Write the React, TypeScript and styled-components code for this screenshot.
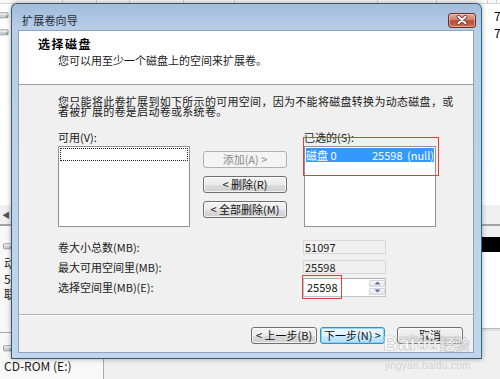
import React from 'react'
import styled, { createGlobalStyle } from 'styled-components'

const GlobalStyle = createGlobalStyle`
  html, body {
    margin: 0;
    padding: 0;
  }
  body {
    width: 500px;
    height: 379px;
    overflow: hidden;
    background: #fff;
    font-family: "Noto Sans CJK SC", "Noto Sans", sans-serif;
  }
`

const Scene = styled.div`
  position: relative;
  width: 500px;
  height: 379px;
  overflow: hidden;
`

/* ---------- disk management window behind the wizard ---------- */

const Backdrop = styled.div`
  display: flex;
  flex-direction: column;
  width: 500px;
  height: 379px;
  background: #fff;
  overflow: hidden;
`

const ColHeader = styled.div`
  display: flex;
  flex: none;
  height: 3px;
  border-bottom: 1px solid #d6d6d6;
  background: #f7f7f7;
`

const ColCell = styled.div<{ $w: number }>`
  flex: none;
  width: ${p => p.$w}px;
  border-right: 1px solid #cfcfcf;
`

const UpperList = styled.div`
  display: flex;
  flex-direction: column;
  flex: none;
  height: 201px;
  padding-top: 3px;
  box-sizing: border-box;
`

const VolRow = styled.div`
  display: flex;
  align-items: center;
  height: 17px;
  font-size: 12px;
  color: #000;
`

const RowSpacer = styled.div`
  flex: 1;
`

const ClipCell = styled.div`
  width: 6px;
  overflow: hidden;
  white-space: nowrap;
`

const HScroll = styled.div`
  display: flex;
  align-items: center;
  flex: none;
  height: 19px;
  padding-left: 2px;
  box-sizing: border-box;
  background: #f0f0f0;
  font-size: 8px;
  color: #555;
`

const Splitter = styled.div`
  flex: none;
  height: 2px;
  background: #a4a4a4;
`

const LowerPane = styled.div`
  display: flex;
  flex: 1;
  min-height: 0;
`

const DiskLabels = styled.div`
  display: flex;
  flex-direction: column;
  width: 103px;
  border-right: 1px solid #a9a9a9;
  background: #f8f8f8;
`

const DiskBlock = styled.div<{ $h: number; $top: number }>`
  display: flex;
  flex-direction: column;
  flex: none;
  height: ${p => p.$h}px;
  padding: ${p => p.$top}px 0 0 4px;
  box-sizing: border-box;
  border-bottom: 1px solid #a9a9a9;
  font-size: 12px;
  line-height: 15.5px;
  color: #1a1a1a;
  white-space: nowrap;
`

const DiskText = styled.div<{ $gap: number }>`
  margin-top: ${p => p.$gap}px;
`

const DiskGraph = styled.div`
  display: flex;
  flex-direction: column;
  flex: 1;
  background: #f0f0f0;
`

const GraphGap = styled.div`
  flex: none;
  height: 11px;
`

const UnallocatedStripe = styled.div`
  flex: none;
  height: 15px;
  background: #000;
`

const UnallocatedBody = styled.div`
  flex: none;
  height: 76px;
  background: #fff;
  border-bottom: 1px solid #b8b8b8;
  box-shadow: 0 2px 0 #ddd;
`

/* ---------- wizard window ---------- */

const Dialog = styled.div`
  position: absolute;
  left: 11px;
  top: 3px;
  width: 471px;
  height: 356px;
  box-sizing: border-box;
  display: flex;
  flex-direction: column;
  padding: 0 7px 5px 6px;
  border: 1px solid #42566f;
  border-right-color: #2b6c8c;
  border-radius: 6px 6px 0 0;
  background: linear-gradient(180deg, #a2bcda 0px, #b8cfe8 26px, #c0d6ee 100%);
  box-shadow: 0 0 5px rgba(0, 0, 0, 0.35);
`

const TitleBar = styled.div`
  display: flex;
  align-items: center;
  justify-content: space-between;
  height: 26px;
  padding: 6px 0 0 4px;
  margin-right: -2px;
  box-sizing: border-box;
`

const TitleText = styled.div`
  font-size: 11px;
  color: #1f2a36;
  letter-spacing: 0.2px;
`

const CloseButton = styled.div`
  display: flex;
  align-items: center;
  justify-content: center;
  width: 28px;
  height: 15px;
  box-sizing: border-box;
  border: 1px solid #6e2f28;
  border-radius: 3px;
  background: linear-gradient(180deg, #e4a89c 0%, #d3806f 45%, #bb4a35 52%, #cf6d55 100%);
  box-shadow: inset 0 0 0 1px rgba(255, 220, 210, 0.45);
`

const Client = styled.div`
  display: flex;
  flex-direction: column;
  flex: 1;
  border: 1px solid #8ea3bc;
  background: #f0f0f0;
  color: #111;
`

const Header = styled.div`
  display: flex;
  flex-direction: column;
  height: 54px;
  box-sizing: border-box;
  padding: 6px 0 0 19px;
  background: #fff;
  border-bottom: 1px solid #a0a0a0;
`

const HeaderTitle = styled.div`
  font-size: 12px;
  line-height: 14px;
  font-weight: 700;
  letter-spacing: 1.5px;
  color: #000;
`

const HeaderSub = styled.div`
  margin: 2px 0 0 20px;
  font-size: 11px;
  line-height: 14px;
  color: #1a1a1a;
`

const Body = styled.div`
  display: flex;
  flex-direction: column;
  flex: 1;
  padding-left: 39px;
`

const Desc = styled.div`
  margin-top: 11px;
  font-size: 11px;
  line-height: 10px;
  letter-spacing: 0.3px;
  white-space: nowrap;
  color: #1a1a1a;
`

const ListsRow = styled.div`
  display: flex;
  align-items: flex-start;
  margin-top: 15px;
`

const ListColumn = styled.div`
  display: flex;
  flex-direction: column;
  width: 132px;
`

const ListLabel = styled.div`
  height: 13px;
  margin-bottom: 2px;
  font-size: 11px;
  line-height: 13px;
  color: #1a1a1a;
  white-space: nowrap;
`

const ListBox = styled.div`
  display: flex;
  flex-direction: column;
  height: 81px;
  box-sizing: border-box;
  padding: 1px;
  border: 1px solid #8f9398;
  background: #fff;
`

const FocusRow = styled.div`
  height: 13px;
  box-sizing: border-box;
  border: 1px dotted #222;
`

const SelectedRow = styled.div`
  display: flex;
  align-items: center;
  height: 14px;
  overflow: hidden;
  background: #3399ff;
  color: #fff;
  font-size: 11px;
  white-space: nowrap;
`

const Cell = styled.span<{ $w?: number }>`
  flex: none;
  width: ${p => (p.$w ? `${p.$w}px` : 'auto')};
`

const ButtonColumn = styled.div`
  display: flex;
  flex-direction: column;
  gap: 8px;
  padding-top: 20px;
  margin: 0 17px 0 13px;
`

const Btn = styled.button<{ $w: number; $primary?: boolean }>`
  width: ${p => p.$w}px;
  height: 17px;
  padding: 0;
  box-sizing: border-box;
  border: 1px solid ${p => (p.$primary ? '#3a8ec4' : '#707070')};
  border-radius: 3px;
  background: ${p =>
    p.$primary
      ? 'linear-gradient(180deg, #f0f9fe 0%, #e0f3fd 50%, #c8eafd 51%, #b4def6 100%)'
      : 'linear-gradient(180deg, #f3f3f3 0%, #ebebeb 50%, #dddddd 51%, #cfcfcf 100%)'};
  box-shadow: inset 0 0 0 1px ${p => (p.$primary ? 'rgba(130, 210, 250, 0.9)' : 'rgba(255, 255, 255, 0.7)')};
  font-family: "Noto Sans CJK SC", "Noto Sans", sans-serif;
  font-size: 11px;
  line-height: 15px;
  color: #111;
  white-space: nowrap;

  &:disabled {
    border-color: #adb2b5;
    background: #f4f4f4;
    box-shadow: none;
    color: #8a8a8a;
  }
`

const Fields = styled.div`
  display: flex;
  flex-direction: column;
  margin-top: 10px;
`

const FieldRow = styled.div`
  display: flex;
  align-items: center;
  height: 20px;
`

const FieldLabel = styled.div`
  width: 245px;
  font-size: 11px;
  color: #222;
  white-space: nowrap;
`

const ReadOnlyBox = styled.div`
  display: flex;
  align-items: center;
  width: 83px;
  height: 14px;
  box-sizing: border-box;
  padding-left: 1px;
  border: 1px solid #d8d8d8;
  background: #f0f0f0;
  font-size: 11px;
  color: #222;
`

const SpinBox = styled.div`
  display: flex;
  width: 83px;
  height: 19px;
  box-sizing: border-box;
  border: 1px solid #bfc3c8;
  border-top-color: #abadb3;
  background: #fff;
`

const SpinValue = styled.div`
  display: flex;
  align-items: center;
  flex: 1;
  padding-left: 3px;
  font-size: 11px;
  color: #111;
`

const SpinButtons = styled.div`
  display: flex;
  flex-direction: column;
  width: 16px;
  padding: 1px 0;
  box-sizing: border-box;
  gap: 1px;
`

const SpinHalf = styled.div`
  display: flex;
  align-items: center;
  justify-content: center;
  flex: 1;
  border: 1px solid #d4d8de;
  border-radius: 1px;
  background: linear-gradient(180deg, #f6f7f9, #e3e6ea);
`

const Footer = styled.div`
  display: flex;
  justify-content: flex-end;
  align-items: flex-start;
  height: 38px;
  box-sizing: border-box;
  padding: 12px 10px 0 0;
  border-top: 1px solid #b3b3b3;
  box-shadow: inset 0 1px 0 #fff;
`

const NavGroup = styled.div`
  display: flex;
  gap: 3px;
  margin-right: 12px;
`

/* ---------- overlays: annotations and watermark ---------- */

const Annotation = styled.div<{ $x: number; $y: number; $w: number; $h: number }>`
  position: absolute;
  left: ${p => p.$x}px;
  top: ${p => p.$y}px;
  width: ${p => p.$w}px;
  height: ${p => p.$h}px;
  box-sizing: border-box;
  border: 1px solid #e43d3d;
  pointer-events: none;
`

const Watermark = styled.div`
  position: absolute;
  left: 383px;
  top: 332px;
  display: flex;
  align-items: flex-end;
  color: rgba(255, 255, 255, 0.8);
  -webkit-text-stroke: 0.6px rgba(140, 140, 140, 0.55);
  pointer-events: none;
`

const WmLatin = styled.span`
  font-family: "Liberation Sans", Arial, sans-serif;
  font-size: 21px;
  font-weight: 700;
  line-height: 22px;
`

const WmPaw = styled.span`
  position: relative;
  display: inline-flex;
  font-family: "Liberation Sans", Arial, sans-serif;
  font-size: 17px;
  font-weight: 700;
  line-height: 20px;
  margin: 0 1px;
`

const PawMark = styled.svg`
  position: absolute;
  left: 1px;
  top: -2px;
`

const WmCjk = styled.span`
  font-size: 15px;
  font-weight: 700;
  line-height: 20px;
  margin-left: 1px;
`

const WmUrl = styled.div`
  position: absolute;
  left: 385px;
  top: 360px;
  font-family: "Liberation Sans", Arial, sans-serif;
  font-size: 10px;
  color: rgba(205, 205, 205, 0.9);
  letter-spacing: 0.3px;
  pointer-events: none;
`

const DriveIcon: React.FC = () => (
  <svg width="10" height="7" viewBox="0 0 10 7" style={{ marginLeft: -1, flex: 'none' }}>
    <rect x="0.5" y="0.8" width="8.6" height="5" rx="1" fill="#cdd0d5" stroke="#858a92" strokeWidth="0.8" />
    <rect x="1.2" y="1.4" width="7.2" height="1.4" fill="#f2f3f5" />
    <circle cx="7.8" cy="4.3" r="0.9" fill="#35b445" />
  </svg>
)

const CloseGlyph: React.FC = () => (
  <svg width="12" height="10" viewBox="0 0 12 10">
    <path d="M2.5 1.8 L9.5 8.2 M9.5 1.8 L2.5 8.2" stroke="#6b3028" strokeWidth="3.6" strokeLinecap="round" />
    <path d="M2.5 1.8 L9.5 8.2 M9.5 1.8 L2.5 8.2" stroke="#fff" strokeWidth="2.1" strokeLinecap="round" />
  </svg>
)

const Arrow: React.FC<{ up?: boolean }> = ({ up }) => (
  <svg width="7" height="4" viewBox="0 0 7 4">
    <path d={up ? 'M0.5 3.5 L3.5 0.5 L6.5 3.5 Z' : 'M0.5 0.5 L3.5 3.5 L6.5 0.5 Z'} fill="#56709c" />
  </svg>
)

const columns = [62, 33, 32, 53, 50, 142, 58, 50, 8, 12]

export default function App() {
  return (
    <Scene>
      <GlobalStyle />
      <Backdrop>
        <ColHeader>
          {columns.map((w, i) => (
            <ColCell key={i} $w={w} />
          ))}
        </ColHeader>
        <UpperList>
          {['75.32 GB', '75.32 GB'].map((v, i) => (
            <VolRow key={i}>
              <DriveIcon />
              <RowSpacer />
              <ClipCell>{v}</ClipCell>
            </VolRow>
          ))}
        </UpperList>
        <HScroll>◀</HScroll>
        <Splitter />
        <LowerPane>
          <DiskLabels>
            <DiskBlock $h={107} $top={17}>
              <DriveIcon />
              <DiskText $gap={5}>动态</DiskText>
              <div>50.00 GB</div>
              <div>联机</div>
            </DiskBlock>
            <DiskBlock $h={60} $top={12}>
              <DriveIcon />
              <DiskText $gap={6}>CD-ROM (E:)</DiskText>
            </DiskBlock>
          </DiskLabels>
          <DiskGraph>
            <GraphGap />
            <UnallocatedStripe />
            <UnallocatedBody />
          </DiskGraph>
        </LowerPane>
      </Backdrop>

      <Dialog>
        <TitleBar>
          <TitleText>扩展卷向导</TitleText>
          <CloseButton>
            <CloseGlyph />
          </CloseButton>
        </TitleBar>
        <Client>
          <Header>
            <HeaderTitle>选择磁盘</HeaderTitle>
            <HeaderSub>您可以用至少一个磁盘上的空间来扩展卷。</HeaderSub>
          </Header>
          <Body>
            <Desc>
              您只能将此卷扩展到如下所示的可用空间，因为不能将磁盘转换为动态磁盘，或
              <br />
              者被扩展的卷是启动卷或系统卷。
            </Desc>
            <ListsRow>
              <ListColumn>
                <ListLabel>可用(V):</ListLabel>
                <ListBox>
                  <FocusRow />
                </ListBox>
              </ListColumn>
              <ButtonColumn>
                <Btn $w={84} disabled>
                  添加(A) &gt;
                </Btn>
                <Btn $w={84}>&lt; 删除(R)</Btn>
                <Btn $w={84}>&lt; 全部删除(M)</Btn>
              </ButtonColumn>
              <ListColumn>
                <ListLabel>已选的(S):</ListLabel>
                <ListBox>
                  <SelectedRow>
                    <Cell $w={66}>磁盘 0</Cell>
                    <Cell $w={35}>25598</Cell>
                    <Cell>(null)</Cell>
                  </SelectedRow>
                </ListBox>
              </ListColumn>
            </ListsRow>
            <Fields>
              <FieldRow>
                <FieldLabel>卷大小总数(MB):</FieldLabel>
                <ReadOnlyBox>51097</ReadOnlyBox>
              </FieldRow>
              <FieldRow>
                <FieldLabel>最大可用空间里(MB):</FieldLabel>
                <ReadOnlyBox>25598</ReadOnlyBox>
              </FieldRow>
              <FieldRow>
                <FieldLabel>选择空间里(MB)(E):</FieldLabel>
                <SpinBox>
                  <SpinValue>25598</SpinValue>
                  <SpinButtons>
                    <SpinHalf>
                      <Arrow up />
                    </SpinHalf>
                    <SpinHalf>
                      <Arrow />
                    </SpinHalf>
                  </SpinButtons>
                </SpinBox>
              </FieldRow>
            </Fields>
          </Body>
          <Footer>
            <NavGroup>
              <Btn $w={66}>&lt; 上一步(B)</Btn>
              <Btn $w={65} $primary>
                下一步(N) &gt;
              </Btn>
            </NavGroup>
            <Btn $w={66}>取消</Btn>
          </Footer>
        </Client>
      </Dialog>

      <Annotation $x={303} $y={137} $w={136} $h={39} />
      <Annotation $x={302} $y={275} $w={40} $h={24} />

      <Watermark>
        <WmLatin>Bai</WmLatin>
        <WmPaw>
          <PawMark width="18" height="10" viewBox="0 0 18 10">
            <ellipse cx="3" cy="5" rx="2" ry="2.6" fill="rgba(255,255,255,0.7)" />
            <ellipse cx="7" cy="2.6" rx="2" ry="2.4" fill="rgba(255,255,255,0.7)" />
            <ellipse cx="11" cy="2.6" rx="2" ry="2.4" fill="rgba(255,255,255,0.7)" />
            <ellipse cx="15" cy="5" rx="2" ry="2.6" fill="rgba(255,255,255,0.7)" />
          </PawMark>
          du
        </WmPaw>
        <WmCjk>经验</WmCjk>
      </Watermark>
      <WmUrl>jingyan.baidu.com</WmUrl>
    </Scene>
  )
}
